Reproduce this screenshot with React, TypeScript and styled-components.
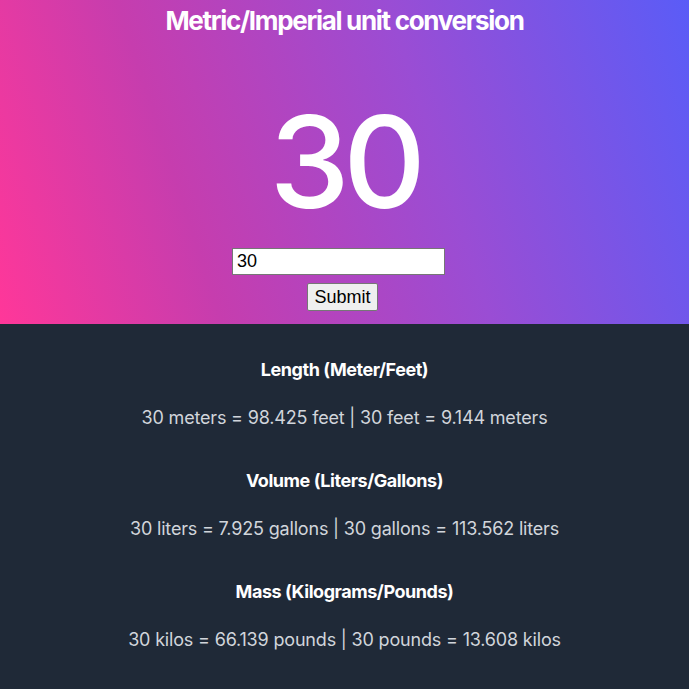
import React, { useState } from 'react';
import styled, { createGlobalStyle } from 'styled-components';

const GlobalStyle = createGlobalStyle`
  html, body {
    margin: 0;
    padding: 0;
    background: #1f2937;
  }
  body {
    font-family: Inter, "Noto Sans", sans-serif;
  }
`;

const Page = styled.div`
  width: 100%;
  min-height: 689px;
  background: #1f2937;
`;

// Parte de cima, com o gradiente
const Hero = styled.header`
  display: flex;
  flex-direction: column;
  align-items: center;
  height: 324px;
  box-sizing: border-box;
  background: linear-gradient(72deg, #ff3799 0%, #c63dae 28%, #9a4dd4 62%, #5a5cf7 100%);
  color: #fff;
`;

const Title = styled.h1`
  margin: 0;
  font-size: 26px;
  line-height: 42px;
  font-weight: 700;
  letter-spacing: -0.05em;
`;

const BigNumber = styled.div`
  margin-top: 56px;
  font-size: 128px;
  line-height: 128px;
  font-weight: 500;
  letter-spacing: -0.05em;
`;

const Form = styled.form`
  display: flex;
  flex-direction: column;
  align-items: center;
  gap: 8px;
  margin-top: 22px;
`;

const NumberInput = styled.input`
  box-sizing: border-box;
  width: 213px;
  height: 27px;
  margin-right: 12px;
  padding: 1px 2px 1px 4px;
  border: 1px solid #767676;
  font-family: "Liberation Sans", Arial, sans-serif;
  font-size: 18px;
  color: #000;
  background: #fff;
`;

const SubmitButton = styled.button`
  box-sizing: border-box;
  width: 71px;
  height: 28px;
  margin-right: 4px;
  padding: 0 6px;
  border: 1px solid #767676;
  border-radius: 2px;
  background: #efefef;
  font-family: "Liberation Sans", Arial, sans-serif;
  font-size: 18px;
  color: #000;
`;

const Results = styled.main`
  display: flex;
  flex-direction: column;
  align-items: center;
  padding-top: 34px;
  gap: 37px;
`;

const Block = styled.section`
  display: flex;
  flex-direction: column;
  align-items: center;
  gap: 22px;
`;

const BlockTitle = styled.h3`
  margin: 0;
  font-size: 18px;
  line-height: 24px;
  font-weight: 700;
  letter-spacing: -0.025em;
  color: #fff;
`;

const Line = styled.p`
  margin: 0;
  font-size: 18px;
  line-height: 28px;
  letter-spacing: -0.18px;
  color: #d1d5db;
`;

interface Conversion {
  title: string;
  metric: string;
  imperial: string;
  toImperial: number;
  toMetric: number;
}

const conversions: Conversion[] = [
  { title: 'Length (Meter/Feet)', metric: 'meters', imperial: 'feet', toImperial: 3.28084, toMetric: 0.3048 },
  { title: 'Volume (Liters/Gallons)', metric: 'liters', imperial: 'gallons', toImperial: 0.264172, toMetric: 3.78541 },
  { title: 'Mass (Kilograms/Pounds)', metric: 'kilos', imperial: 'pounds', toImperial: 2.20462, toMetric: 0.453592 },
];

export default function App() {
  const [input, setInput] = useState('30');
  const [value, setValue] = useState(30);

  const handleSubmit = (e: React.FormEvent) => {
    e.preventDefault();
    const n = parseFloat(input);
    if (!isNaN(n)) setValue(n);
  };

  return (
    <Page>
      <GlobalStyle />
      <Hero>
        <Title>Metric/Imperial unit conversion</Title>
        <BigNumber>{value}</BigNumber>
        <Form onSubmit={handleSubmit}>
          <NumberInput value={input} onChange={e => setInput(e.target.value)} />
          <SubmitButton type="submit">Submit</SubmitButton>
        </Form>
      </Hero>
      <Results>
        {conversions.map(c => (
          <Block key={c.title}>
            <BlockTitle>{c.title}</BlockTitle>
            <Line>
              {value} {c.metric} = {(value * c.toImperial).toFixed(3)} {c.imperial} | {value} {c.imperial} ={' '}
              {(value * c.toMetric).toFixed(3)} {c.metric}
            </Line>
          </Block>
        ))}
      </Results>
    </Page>
  );
}
